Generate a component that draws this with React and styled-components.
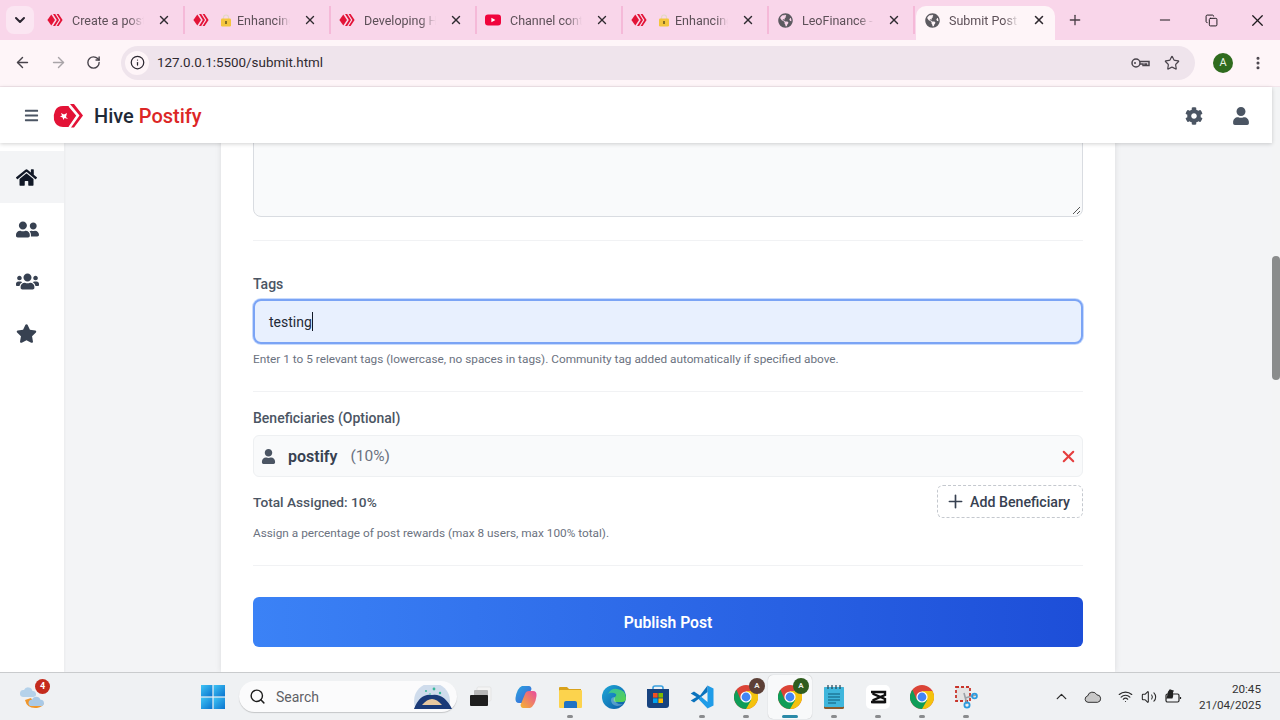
import React from 'react';
import styled, { createGlobalStyle } from 'styled-components';
import { FaHome, FaUserFriends, FaUsers, FaStar, FaCog, FaUser, FaBars, FaGlobeAmericas } from 'react-icons/fa';
import { ArrowLeft, ArrowRight, RotateCw, Info, Star, X, Plus, Minus, ChevronDown, ChevronUp, Search, Copy, EllipsisVertical, Wifi, Volume2 } from 'lucide-react';

const Global = createGlobalStyle`
  html, body { margin: 0; padding: 0; width: 1280px; height: 720px; overflow: hidden; }
  * { box-sizing: border-box; }
  body { font-family: Roboto, "Noto Sans", sans-serif; }
`;

const Page = styled.div`display: flex; flex-direction: column; width: 1280px; height: 720px; overflow: hidden; background: #f3f4f6;`;

/* ---------- Browser tabs ---------- */
const TabStrip = styled.div`display: flex; align-items: flex-start; height: 40px; flex: none; padding: 6px 0 0 6px; background: #f9d6ea;`;
const TabMenu = styled.div`display: flex; align-items: center; justify-content: center; width: 28px; height: 28px; margin-right: 5px; border-radius: 8px; background: #fbe6f2; color: #2b2530;`;
const Tab = styled.div`
  display: flex; align-items: center; height: 28px; width: 146px; flex: none; padding: 0 12px 0 8px;
  border-right: 2px solid #f5b9d8;
`;
const ActiveTab = styled.div`
  display: flex; align-items: center; height: 34px; width: 139px; flex: none; padding: 0 9px 6px 8px; margin-left: 1px;
  background: #fef5f8; border-radius: 10px 10px 0 0;
`;
const Fav = styled.span`display: flex; flex: none; width: 16px; height: 16px; color: #5c5a60; align-items: center; justify-content: center;`;
const Lock = styled.span`flex: none; margin-left: 12px; margin-right: -3px; display: flex;`;
const TabTitle = styled.span`
  flex: 1; min-width: 0; margin-left: 9px; font-size: 12.5px; color: #5d5058; white-space: nowrap; overflow: hidden;
  -webkit-mask-image: linear-gradient(90deg, #000 78%, transparent 100%);
  mask-image: linear-gradient(90deg, #000 78%, transparent 100%);
`;
const TabClose = styled.span`display: flex; flex: none; margin-left: 13px; color: #2f2a30;`;
const NewTab = styled.span`display: flex; margin: 6px 0 0 12px; color: #4a3f47;`;
const WindowControls = styled.div`display: flex; margin-left: auto; height: 28px; align-items: center; color: #1e1a1e;`;
const WindowBtn = styled.span`display: flex; width: 46px; justify-content: center;`;

/* ---------- Browser toolbar ---------- */
const Toolbar = styled.div`display: flex; align-items: center; height: 47px; flex: none; padding: 0 0 1px 14px; background: #fef5f8; color: #4a4550; border-bottom: 1px solid #f3e6ec;`;
const NavBtn = styled.span`display: flex; width: ${p => p.$w || 36}px; justify-content: flex-start; color: ${p => p.$off ? '#a9a4a8' : '#47424a'};`;
const AddressBar = styled.div`display: flex; align-items: center; width: 1074px; height: 34px; padding: 0 15px 0 4px; border-radius: 17px; background: #efe4ec;`;
const InfoBadge = styled.span`display: flex; align-items: center; justify-content: center; width: 24px; height: 24px; border-radius: 50%; background: #fef5f8; color: #2b2730;`;
const Url = styled.span`margin-left: 8px; font-size: 13.4px; color: #2f2a30;`;
const AddressIcons = styled.div`display: flex; align-items: center; gap: 14px; margin-left: auto; color: #4a444c;`;
const Avatar = styled.span`display: flex; align-items: center; justify-content: center; width: 20px; height: 20px; margin-left: 18px; border-radius: 50%; background: #2f6b1e; color: #e8f3e4; font-size: 11px;`;
const Kebab = styled.span`display: flex; margin-left: 17px; color: #4a444c;`;

/* ---------- Page viewport (app + its scrollbar) ---------- */
const Viewport = styled.div`display: flex; flex: 1; min-height: 0;`;
const AppColumn = styled.div`display: flex; flex-direction: column; flex: 1; min-width: 0;`;

/* ---------- App header ---------- */
const AppHeader = styled.header`
  position: relative; z-index: 3; display: flex; align-items: center; height: 56px; flex: none; padding: 1px 22px 0 24px;
  background: #fff; box-shadow: 0 1px 4px rgba(0,0,0,.18); color: #4b5563;
`;
const Brand = styled.div`display: flex; align-items: center; margin-left: 14px; font-size: 20px; font-weight: 500; color: #1f2937;`;
const BrandName = styled.span`margin-left: 11px; em { font-style: normal; color: #dc2626; }`;
const HeaderIcons = styled.div`display: flex; align-items: center; gap: 29px; margin-left: auto; font-size: 18px;`;

/* ---------- Body ---------- */
const Body = styled.div`display: flex; flex: 1; min-height: 0; overflow: hidden;`;
const Sidebar = styled.nav`display: flex; flex-direction: column; width: 64px; flex: none; padding-top: 8px; background: #fff; box-shadow: 1px 0 2px rgba(0,0,0,.04);`;
const SideItem = styled.div`
  display: flex; align-items: center; padding-left: 16px; height: 52px; font-size: ${p => p.$size}px;
  color: ${p => p.$active ? '#111827' : '#374151'}; background: ${p => p.$active ? '#f3f4f6' : 'transparent'};
`;
const Main = styled.main`flex: 1; display: flex; justify-content: center; min-width: 0;`;
const Card = styled.section`width: 894px; margin-top: -20px; padding: 0 32px; background: #fff; box-shadow: 0 0 6px rgba(0,0,0,.1); flex: none;`;
const TextArea = styled.div`position: relative; height: 94px; border: 1px solid #d9dce1; border-radius: 8px; background: #f9fafb;`;
const Grip = styled.svg`position: absolute; right: 1px; bottom: 1px;`;
const Divider = styled.hr`margin: ${p => p.$m || '0'}; border: 0; border-top: 1px solid #f1f2f4;`;
const Label = styled.div`font-size: 14px; line-height: 20px; font-weight: 500; color: #4b5563;`;
const TagInput = styled.div`
  display: flex; align-items: center; height: 45px; margin-top: 5px; padding-left: 14px; font-size: 14px; color: #1f2937;
  background: #e8f0fe; border: 2px solid #7ba4f5; border-radius: 8px; box-shadow: 0 0 0 1px #c7dafd;
`;
const Caret = styled.span`display: inline-block; width: 1.5px; height: 19px; background: #111827;`;
const Help = styled.div`font-size: 11.8px; line-height: 16px; color: #6b7280; margin-top: ${p => p.$mt || '7px'};`;
const BenRow = styled.div`
  display: flex; align-items: center; height: 42px; margin-top: 7px; padding: 0 4px 0 7px; background: #f9fafb; border: 1px solid #eef0f2; border-radius: 6px;
`;
const BenIcon = styled.span`display: flex; color: #4b5563; font-size: 15px;`;
const BenName = styled.span`margin-left: 12px; font-size: 16px; font-weight: 600; color: #374151;`;
const BenPct = styled.span`margin-left: 13px; font-size: 15.5px; color: #6b7280;`;
const BenRemove = styled.span`display: flex; margin-left: auto; color: #e53e3e;`;
const TotalRow = styled.div`display: flex; align-items: center; justify-content: space-between; margin-top: 8px;`;
const Total = styled.span`font-size: 13.7px; font-weight: 500; color: #4b5563;`;
const AddBtn = styled.div`
  display: flex; align-items: center; gap: 4.5px; width: 146px; height: 33px; padding: 0 0 0 6.5px; font-size: 14.2px; font-weight: 500; color: #374151;
  border: 1px dashed #c4c8ce; border-radius: 6px; background: #fff;
`;
const Publish = styled.div`
  display: flex; align-items: center; justify-content: center; height: 50px; border-radius: 6px; color: #fff; font-size: 15.7px; font-weight: 600;
  background: linear-gradient(90deg, #3b82f6, #1d4ed8);
`;
const ScrollTrack = styled.div`position: relative; width: 8px; flex: none; background: #f3f4f5;`;
const ScrollThumb = styled.div`position: absolute; left: 0; top: 169px; width: 8px; height: 124px; border-radius: 4px; background: #8a8c8c;`;

/* ---------- Taskbar ---------- */
const Taskbar = styled.footer`
  position: relative; z-index: 3; display: flex; align-items: center; height: 48px; flex: none; padding: 0 0 0 15px; background: #eff1f3; border-top: 1px solid #c9cbcd;
`;
const Weather = styled.div`position: relative; width: 36px; height: 36px; margin-right: 150px; display: flex; align-items: center; justify-content: center;`;
const WeatherBadge = styled.span`position: absolute; top: 0; right: 1px; display: flex; align-items: center; justify-content: center; width: 15px; height: 15px; border-radius: 50%; background: #c42b1c; color: #fff; font-size: 9px; font-weight: 700;`;
const StartBtn = styled.span`display: flex; margin-right: 14px;`;
const SearchBox = styled.div`display: flex; align-items: center; width: 218px; height: 31px; margin-right: 1px; padding-left: 10px; border-radius: 16px; background: #fbfbfc; box-shadow: 0 1px 1px rgba(0,0,0,.18); color: #1d1d1d;`;
const SearchText = styled.span`margin-left: 10px; font-size: 14px; color: #5f6166;`;
const SearchArt = styled.span`display: flex; margin-left: auto; margin-right: 3px;`;
const Slot = styled.div`
  position: relative; display: flex; align-items: center; justify-content: center; width: 44px; height: 44px; flex: none; border-radius: 5px;
  margin-right: ${p => p.$mr || 0}px;
  background: ${p => p.$active ? '#f8f9fa' : 'transparent'}; box-shadow: ${p => p.$active ? '0 0 1px rgba(0,0,0,.3)' : 'none'};
`;
const Dot = styled.span`position: absolute; bottom: 1px; left: 50%; transform: translateX(-50%); width: ${p => p.$active ? '16px' : '6px'}; height: 3px; border-radius: 2px; background: ${p => p.$active ? '#2b8aa8' : '#8a8c8e'};`;
const ProfileBadge = styled.span`position: absolute; top: 3px; right: 3px; display: flex; align-items: center; justify-content: center; width: 16px; height: 16px; border-radius: 50%; background: ${p => p.$c}; color: #eee; font-size: 8px; font-weight: 600;`;
const Tray = styled.div`display: flex; align-items: center; margin-left: auto; padding-right: 19px; color: #2a2a2a;`;
const TrayIcon = styled.span`display: flex; justify-content: center; width: ${p => p.$w || 26}px; margin-left: ${p => p.$ml || 0}px;`;
const Clock = styled.div`width: 62px; margin-left: 13px; text-align: right; font-size: 11.7px; line-height: 16px; color: #333;`;

/* ---------- Drawings ---------- */
const HiveIcon = ({ size = 16 }) => (
  <svg width={size} height={size} viewBox="0 0 16 16">
    <path d="M4.3 2.5 L0.4 8 L4.3 13.5 L8 8Z" fill="#e31337" />
    <path d="M6 2 h2.2 L12 8 L8.2 14 H6 L9.8 8Z" fill="#e31337" />
    <path d="M9.6 2 h2 L15.6 8 L11.6 14 h-2 L13.4 8Z" fill="#e31337" />
  </svg>
);
const YouTube = () => (
  <svg width="16" height="16" viewBox="0 0 16 16"><rect x="0" y="2.5" width="16" height="11" rx="3" fill="#f0043c" /><path d="M6.4 5.8 10.4 8 6.4 10.2Z" fill="#fff" /></svg>
);
const LockIcon = () => (
  <svg width="10" height="13" viewBox="0 0 10 13"><path d="M2.5 5V3.5a2.5 2.5 0 0 1 5 0V5" fill="none" stroke="#e3d9c4" strokeWidth="1.2" /><rect y="4.5" width="10" height="8" rx="1.2" fill="#f4c63d" /><rect x="4.2" y="7" width="1.6" height="3" fill="#6d5a20" /></svg>
);
const HiveLogo = () => (
  <svg width="30" height="24" viewBox="0 0 30 24">
    <path d="M2 7 Q4 2 10 2 H16 L24 11.5 L16 23 H10 Q3 23 1 16 Q0 11 2 7Z" fill="#e31337" />
    <path d="M17 0 H21 L30 11.5 L21 23.5 H18 L26.5 11.5Z" fill="#e31337" />
    <path d="M8 9 L11 10.5 L14 9 L13 13 L15 15 L11.5 14 L10.5 16 L9.5 13.5 L7 12.5 L9 11.5Z" fill="#fff" />
    <path d="M16 2 L24 11.5 L16 23" fill="none" stroke="#fff" strokeWidth="1.2" />
  </svg>
);
const KeyIcon = () => (
  <svg width="19" height="12" viewBox="0 0 19 12" fill="none" stroke="#4a444c" strokeWidth="1.5"><circle cx="5" cy="6" r="4" /><path d="M9 4.5h9v4h-2.5V7H14v1.5h-2V7H9" /><circle cx="4" cy="6" r="1" fill="#4a444c" stroke="none" /></svg>
);
const StartIcon = () => (
  <svg width="24" height="24" viewBox="0 0 24 24">
    <defs><linearGradient id="st" x1="0" y1="0" x2="1" y2="1"><stop offset="0" stopColor="#3fc4f5" /><stop offset="1" stopColor="#0a74cf" /></linearGradient></defs>
    <rect x="0" y="0" width="11.4" height="11.4" fill="url(#st)" /><rect x="12.6" y="0" width="11.4" height="11.4" fill="url(#st)" />
    <rect x="0" y="12.6" width="11.4" height="11.4" fill="url(#st)" /><rect x="12.6" y="12.6" width="11.4" height="11.4" fill="url(#st)" />
  </svg>
);
const WeatherIcon = () => (
  <svg width="28" height="28" viewBox="0 0 28 28">
    <path d="M6 17 Q8 26 18 25 Q24 24 25 20 Q16 24 12 15Z" fill="#f0962a" />
    <path d="M4 14 a3.5 3.5 0 0 1 1-7 a4.5 4.5 0 0 1 8.5 1 a3 3 0 0 1 1 6Z" fill="#b5d2ea" />
    <path d="M12 23 a3.2 3.2 0 0 1 1-6.3 a4.5 4.5 0 0 1 8.5 0 a3.2 3.2 0 0 1 1 6.3Z" fill="#a9c9e6" />
  </svg>
);
const SearchArtIcon = () => (
  <svg width="44" height="24" viewBox="0 0 44 24">
    <circle cx="22" cy="16" r="18" fill="#cfdcec" /><path d="M4 24 Q10 8 22 10 Q34 8 42 24Z" fill="#1a3a78" />
    <path d="M12 20 Q22 8 32 20Z" fill="#e8c9a0" /><circle cx="16" cy="6" r="1" fill="#36b89a" /><circle cx="24" cy="4" r="1.4" fill="#36b89a" /><circle cx="30" cy="8" r="1.2" fill="#36b89a" /><circle cx="20" cy="9" r="1" fill="#6fd3bc" />
  </svg>
);
const TaskView = () => (
  <svg width="24" height="24" viewBox="0 0 24 24"><rect x="9" y="2" width="14" height="14" rx="1.5" fill="#f4f4f4" stroke="#dcdcdc" strokeWidth=".6" /><rect x="6" y="5" width="14" height="14" rx="1" fill="#b8b8b8" /><rect x="2" y="10" width="18" height="11" rx="1" fill="#1e1e1e" /></svg>
);
const Copilot = () => (
  <svg width="24" height="24" viewBox="0 0 24 24">
    <defs>
      <linearGradient id="c1" x1="0" y1="0" x2="1" y2="1"><stop offset="0" stopColor="#2aa7e0" /><stop offset="1" stopColor="#3f5fd8" /></linearGradient>
      <linearGradient id="c2" x1="0" y1="1" x2="1" y2="0"><stop offset="0" stopColor="#f5b52e" /><stop offset="1" stopColor="#e84aa0" /></linearGradient>
    </defs>
    <path d="M8 1 H15 Q17 1 17.5 4 L13 15 Q12 18 9 18 H5 Q1 18 1.5 13 Q3 3 8 1Z" fill="url(#c1)" />
    <path d="M16 23 H9 Q7 23 6.5 20 L11 9 Q12 6 15 6 H19 Q23 6 22.5 11 Q21 21 16 23Z" fill="url(#c2)" />
  </svg>
);
const Folder = () => (
  <svg width="24" height="24" viewBox="0 0 24 24">
    <path d="M1 3 Q1 2 2 2 H9 L11 4 H23 V8 H1Z" fill="#d9a21b" /><rect x="1" y="5" width="23" height="18" rx="1" fill="#fcd34d" />
    <path d="M6 18 Q6 16 8 16 H17 Q19 16 19 18 V23 H6Z" fill="#1f72c4" />
  </svg>
);
const Edge = () => (
  <svg width="24" height="24" viewBox="0 0 24 24">
    <defs>
      <linearGradient id="e1" x1="0" y1="0" x2="1" y2="1"><stop offset="0" stopColor="#1ea8d8" /><stop offset="1" stopColor="#0c59a4" /></linearGradient>
      <linearGradient id="e2" x1="0" y1="0" x2="1" y2="1"><stop offset="0" stopColor="#35c1a0" /><stop offset="1" stopColor="#5ad34a" /></linearGradient>
    </defs>
    <circle cx="12" cy="12" r="12" fill="url(#e1)" />
    <path d="M6 9 Q9 3 15 4 Q24 5 24 13 Q24 17 20 17 H13 Q10 15 13 12 Q16 9 12 8 Q8 7 6 9Z" fill="url(#e2)" />
    <path d="M13 12 Q9 12 9 15 Q9 20 15 21 Q19 21 21 19 Q14 20 13 15Z" fill="#eef4f8" opacity=".3" />
  </svg>
);
const Store = () => (
  <svg width="24" height="24" viewBox="0 0 24 24">
    <path d="M7 5 V3 Q7 1 9 1 H15 Q17 1 17 3 V5" fill="none" stroke="#3aa0e0" strokeWidth="1.6" />
    <path d="M1 4 H23 V20 Q23 23 20 23 H4 Q1 23 1 20Z" fill="#17437f" />
    <rect x="7" y="8" width="4.6" height="4.6" fill="#f25022" /><rect x="12.4" y="8" width="4.6" height="4.6" fill="#7fba00" />
    <rect x="7" y="13.4" width="4.6" height="4.6" fill="#00a4ef" /><rect x="12.4" y="13.4" width="4.6" height="4.6" fill="#ffb900" />
  </svg>
);
const VSCode = () => (
  <svg width="24" height="24" viewBox="0 0 24 24">
    <path d="M17.5 0.5 23.5 3.5 V20.5 L17.5 23.5 L8 13.5 L11.5 12 17.5 17 V7Z" fill="#1f9ce8" />
    <path d="M17.5 0.5 V7 L4 17.5 L0.7 15.5 L6.5 12 L0.7 8.5 L4 6.5 L10 10.5Z" fill="#0b73bd" />
  </svg>
);
const ChromeIcon = () => (
  <svg width="24" height="24" viewBox="0 0 24 24">
    <circle cx="12" cy="12" r="12" fill="#db4437" />
    <path d="M12 24 A12 12 0 0 0 22.4 6 H12Z" fill="#f4c20d" />
    <path d="M12 24 L17.2 15 H12 L6.8 15 L2.5 4.7 A12 12 0 0 0 12 24Z" fill="#0f9d58" />
    <circle cx="12" cy="12" r="5.6" fill="#fff" /><circle cx="12" cy="12" r="4.4" fill="#4285f4" />
  </svg>
);
const Notepad = () => (
  <svg width="20" height="24" viewBox="0 0 20 24">
    <rect x="0" y="2" width="20" height="22" rx="1.5" fill="#8a5a2c" /><rect x="0" y="2" width="20" height="20" rx="1" fill="#3fb6dc" />
    <path d="M4 9h12M4 12h12M4 15h12M4 18h8" stroke="#0e5a78" strokeWidth="1.2" />
    <path d="M4 0v4M8 0v4M12 0v4M16 0v4" stroke="#245" strokeWidth="1.2" />
  </svg>
);
const CapCut = () => (
  <svg width="24" height="24" viewBox="0 0 24 24">
    <rect width="24" height="24" rx="5" fill="#fff" />
    <path d="M5 7 H19 V10 L7.5 15 V17 H19" fill="none" stroke="#111" strokeWidth="2.4" /><path d="M5 17 H19 V14 L7.5 9 V7" fill="none" stroke="#111" strokeWidth="2.4" />
  </svg>
);
const Snip = () => (
  <svg width="24" height="24" viewBox="0 0 24 24" fill="none">
    <rect x="2" y="2" width="14" height="14" fill="#e3e3e3" stroke="#c9342a" strokeWidth="1.8" strokeDasharray="3 2" />
    <path d="M10 8 L13 19 M22 10 L11 13" stroke="#9aa0a6" strokeWidth="1.6" />
    <circle cx="13" cy="20" r="2.6" stroke="#2b9be0" strokeWidth="1.8" /><circle cx="20.5" cy="11" r="2.4" stroke="#2b9be0" strokeWidth="1.8" />
  </svg>
);
const Cloud = () => (
  <svg width="18" height="13" viewBox="0 0 18 13"><path d="M4 12.3 a3.2 3.2 0 0 1-.4-6.3 a5 5 0 0 1 9.3-1.2 a3.8 3.8 0 0 1 .8 7.5Z" fill="#c8c8c8" stroke="#333" strokeWidth="1" /></svg>
);
const Battery = () => (
  <svg width="18" height="16" viewBox="0 0 18 16" fill="none" stroke="#222" strokeWidth="1.2"><rect x="2" y="5" width="13" height="8" rx="1.5" /><path d="M16.5 8v2" /><path d="M6 1 C3 4 5 6 3 9 L8 9 C10 6 7 4 9 2Z" fill="#222" /></svg>
);

const tabs = [
  { icon: <HiveIcon />, title: 'Create a post' },
  { icon: <HiveIcon />, lock: true, title: 'Enhancing' },
  { icon: <HiveIcon />, title: 'Developing Hive' },
  { icon: <YouTube />, title: 'Channel content' },
  { icon: <HiveIcon />, lock: true, title: 'Enhancing' },
  { icon: <FaGlobeAmericas size={15} />, title: 'LeoFinance - Hive' },
];

const apps = [
  { el: <TaskView />, mr: 2 },
  { el: <Copilot /> },
  { el: <Folder />, dot: true },
  { el: <Edge /> },
  { el: <Store /> },
  { el: <VSCode />, dot: true },
  { el: <ChromeIcon />, dot: true, badge: '#5d4037' },
  { el: <ChromeIcon />, active: true, dot: true, badge: '#2f5d1e' },
  { el: <Notepad />, dot: true },
  { el: <CapCut />, dot: true },
  { el: <ChromeIcon />, dot: true },
  { el: <Snip />, dot: true },
];

export default function App() {
  return (
    <Page>
      <Global />
      <TabStrip>
        <TabMenu><ChevronDown size={16} strokeWidth={3} /></TabMenu>
        {tabs.map((t, i) => (
          <Tab key={i}>
            <Fav>{t.icon}</Fav>
            {t.lock && <Lock><LockIcon /></Lock>}
            <TabTitle>{t.title}</TabTitle>
            <TabClose><X size={14} strokeWidth={2.4} /></TabClose>
          </Tab>
        ))}
        <ActiveTab>
          <Fav><FaGlobeAmericas size={15} /></Fav>
          <TabTitle>Submit Post - Hive</TabTitle>
          <TabClose><X size={14} strokeWidth={2.6} /></TabClose>
        </ActiveTab>
        <NewTab><Plus size={16} strokeWidth={2} /></NewTab>
        <WindowControls>
          <WindowBtn><Minus size={16} strokeWidth={1.5} /></WindowBtn>
          <WindowBtn><Copy size={13} strokeWidth={1.8} /></WindowBtn>
          <WindowBtn><X size={19} strokeWidth={1.6} /></WindowBtn>
        </WindowControls>
      </TabStrip>

      <Toolbar>
        <NavBtn><ArrowLeft size={17} strokeWidth={2} /></NavBtn>
        <NavBtn $off><ArrowRight size={17} strokeWidth={2} /></NavBtn>
        <NavBtn $w={35}><RotateCw size={15} strokeWidth={2.2} /></NavBtn>
        <AddressBar>
          <InfoBadge><Info size={15} strokeWidth={2} /></InfoBadge>
          <Url>127.0.0.1:5500/submit.html</Url>
          <AddressIcons>
            <KeyIcon />
            <Star size={16} strokeWidth={1.8} />
          </AddressIcons>
        </AddressBar>
        <Avatar>A</Avatar>
        <Kebab><EllipsisVertical size={16} strokeWidth={2.6} /></Kebab>
      </Toolbar>

      <Viewport>
        <AppColumn>
          <AppHeader>
            <FaBars size={15} />
            <Brand>
              <HiveLogo />
              <BrandName>Hive <em>Postify</em></BrandName>
            </Brand>
            <HeaderIcons>
              <FaCog />
              <FaUser />
            </HeaderIcons>
          </AppHeader>

          <Body>
            <Sidebar>
              <SideItem $active $size={21}><FaHome /></SideItem>
              <SideItem $size={23}><FaUserFriends /></SideItem>
              <SideItem $size={23}><FaUsers /></SideItem>
              <SideItem $size={21}><FaStar /></SideItem>
            </Sidebar>
            <Main>
              <Card>
                <TextArea>
                  <Grip width="10" height="10" viewBox="0 0 10 10"><path d="M9 2 2 9M9 6 6 9" stroke="#555" strokeWidth="1" /></Grip>
                </TextArea>
                <Divider $m="23px 0 33px" />
                <Label>Tags</Label>
                <TagInput>testing<Caret /></TagInput>
                <Help>Enter 1 to 5 relevant tags (lowercase, no spaces in tags). Community tag added automatically if specified above.</Help>
                <Divider $m="24px 0 16px" />
                <Label>Beneficiaries (Optional)</Label>
                <BenRow>
                  <BenIcon><FaUser /></BenIcon>
                  <BenName>postify</BenName>
                  <BenPct>(10%)</BenPct>
                  <BenRemove><X size={19} strokeWidth={2.6} /></BenRemove>
                </BenRow>
                <TotalRow>
                  <Total>Total Assigned: 10%</Total>
                  <AddBtn><Plus size={21} strokeWidth={1.9} />Add Beneficiary</AddBtn>
                </TotalRow>
                <Help $mt="7px">Assign a percentage of post rewards (max 8 users, max 100% total).</Help>
                <Divider $m="24px 0 31px" />
                <Publish>Publish Post</Publish>
              </Card>
            </Main>
          </Body>
        </AppColumn>
        <ScrollTrack><ScrollThumb /></ScrollTrack>
      </Viewport>

      <Taskbar>
        <Weather><WeatherIcon /><WeatherBadge>4</WeatherBadge></Weather>
        <StartBtn><StartIcon /></StartBtn>
        <SearchBox>
          <Search size={17} strokeWidth={2} />
          <SearchText>Search</SearchText>
          <SearchArt><SearchArtIcon /></SearchArt>
        </SearchBox>
        {apps.map((a, i) => (
          <Slot key={i} $active={a.active} $mr={a.mr}>
            {a.el}
            {a.badge && <ProfileBadge $c={a.badge}>A</ProfileBadge>}
            {a.dot && <Dot $active={a.active} />}
          </Slot>
        ))}
        <Tray>
          <TrayIcon><ChevronUp size={17} strokeWidth={1.8} /></TrayIcon>
          <TrayIcon $ml={6}><Cloud /></TrayIcon>
          <TrayIcon $ml={6}><Wifi size={15} strokeWidth={1.8} /></TrayIcon>
          <TrayIcon $w={22}><Volume2 size={16} strokeWidth={1.6} /></TrayIcon>
          <TrayIcon $w={26}><Battery /></TrayIcon>
          <Clock>20:45<br />21/04/2025</Clock>
        </Tray>
      </Taskbar>
    </Page>
  );
}
